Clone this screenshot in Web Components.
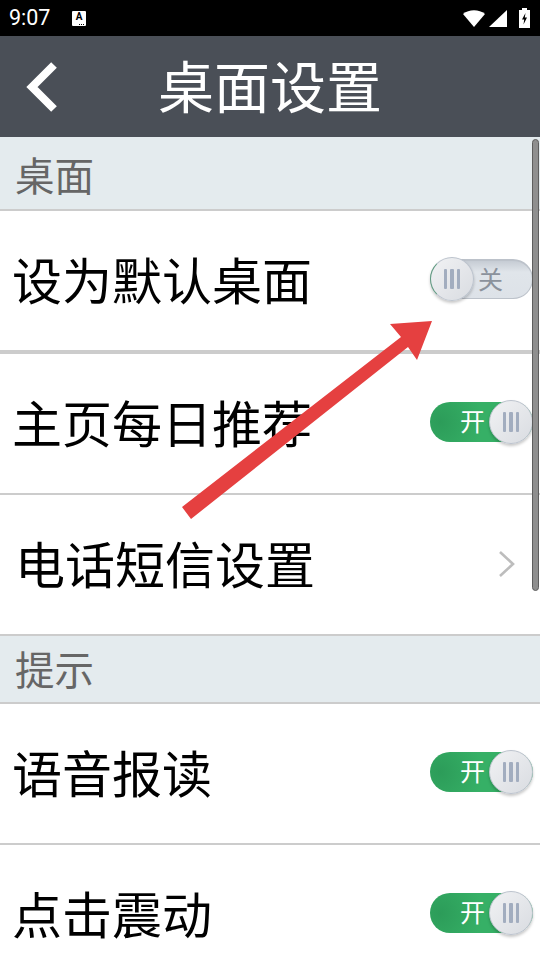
<!DOCTYPE html>
<html lang="zh">
<head>
<meta charset="utf-8">
<title>桌面设置</title>
<style>
  html, body { margin: 0; padding: 0; background: #fff; }
  body {
    width: 540px; height: 960px; overflow: hidden; position: relative;
    font-family: "Noto Sans CJK SC", "Liberation Sans", sans-serif;
  }
</style>
</head>
<body>
<status-bar></status-bar>
<title-bar>桌面设置</title-bar>
<section-head style="height:72px;--nudge:1px">桌面</section-head>
<setting-row style="height:139px;--line:4px"><span>设为默认桌面</span><toggle-switch slot="end"></toggle-switch></setting-row>
<setting-row style="height:139px"><span>主页每日推荐</span><toggle-switch slot="end" on></toggle-switch></setting-row>
<setting-row style="height:139px;--indent:15px"><span>电话短信设置</span><row-chevron slot="end"></row-chevron></setting-row>
<section-head style="height:66px;--nudge:-3px">提示</section-head>
<setting-row style="height:139px"><span>语音报读</span><toggle-switch slot="end" on></toggle-switch></setting-row>
<setting-row style="height:139px"><span>点击震动</span><toggle-switch slot="end" on></toggle-switch></setting-row>
<scroll-thumb></scroll-thumb>
<red-arrow></red-arrow>

<script>
class StatusBar extends HTMLElement {
  constructor() {
    super();
    this.attachShadow({ mode: 'open' }).innerHTML = `
      <style>
        :host { display: flex; align-items: center; height: 36px; background: #000; color: #fff; padding: 0 0 0 9px; box-sizing: border-box; }
        .time { font: 21.5px/36px Roboto, "Liberation Sans", sans-serif; width: 63px; }
        .note { position: relative; width: 14px; height: 15px; background: #fff; border-radius: 1px; color: #000; font: bold 10px/12px Roboto, sans-serif; text-align: center; }
        .note::after { content: ""; position: absolute; right: 1px; bottom: 1px; width: 6px; height: 1px; background: repeating-linear-gradient(90deg, #000 0 1px, #fff 1px 2px); }
        .right { margin-left: auto; display: flex; align-items: center; height: 36px; padding-right: 10px; }
        svg { display: block; }
      </style>
      <span class="time">9:07</span>
      <span class="note">A</span>
      <div class="right">
        <svg width="22" height="17" viewBox="0 0 22 17" style="margin-right:4px"><path d="M0 4 C6 -1 16 -1 22 4 L11 17 Z" fill="#fff"/></svg>
        <svg width="18" height="17" viewBox="0 0 18 17" style="margin-right:12px"><path d="M18 0 V17 H0 Z" fill="#fff"/></svg>
        <svg width="11" height="20" viewBox="0 0 11 20"><path d="M3 0 H8 V2 H11 V20 H0 V2 H3 Z" fill="#fff"/><path d="M6.5 5 L3 11.5 H5.2 L4.5 16.5 L8 9.5 H5.8 Z" fill="#000"/></svg>
      </div>`;
  }
}
class TitleBar extends HTMLElement {
  constructor() {
    super();
    this.attachShadow({ mode: 'open' }).innerHTML = `
      <style>
        :host { display: flex; align-items: center; justify-content: center; position: relative; height: 101px; background: #4a4f57; color: #fff; font-size: 56px; line-height: 95px; }
        .t { display: block; height: 95px; margin-bottom: 6px; }
        svg { position: absolute; left: 25px; top: 25px; }
      </style>
      <svg width="36" height="52" viewBox="0 0 36 52"><path d="M29 4 L7 26 L29 48" fill="none" stroke="#fff" stroke-width="8"/></svg>
      <span class="t"><slot></slot></span>`;
  }
}
class SectionHead extends HTMLElement {
  constructor() {
    super();
    this.attachShadow({ mode: 'open' }).innerHTML = `
      <style>
        :host { display: flex; align-items: center; background: #e4ebee; color: #666; font-size: 39.5px; padding-left: 15px; border-bottom: 2px solid #ccc; }
        span { display: block; margin-top: var(--nudge, 0px); }
      </style>
      <span><slot></slot></span>`;
  }
}
class SettingRow extends HTMLElement {
  constructor() {
    super();
    this.attachShadow({ mode: 'open' }).innerHTML = `
      <style>
        :host { display: flex; align-items: center; justify-content: space-between; background: #fff; color: #000; font-size: 50px; padding-left: var(--indent, 12px); border-bottom: var(--line, 2px) solid #ccc; }
        :host(:last-of-type) { border-bottom: 0; }
        ::slotted(span) { margin-bottom: 6px; }
      </style>
      <slot></slot>
      <slot name="end"></slot>`;
  }
}
class ToggleSwitch extends HTMLElement {
  constructor() {
    super();
    const on = this.hasAttribute('on');
    this.attachShadow({ mode: 'open' }).innerHTML = `
      <style>
        :host { display: block; position: relative; width: 103px; height: 45px; margin: 0 7px 3px 0; }
        .track { position: absolute; inset: 2px 0 3px 0; border-radius: 20px; box-sizing: border-box; display: flex; align-items: center; font-size: 25px; line-height: 36px; }
        .track span { display: block; margin-top: -3px; }
        .on { background: radial-gradient(circle at 10px 20px, #2c9c59, #36b066 45%); color: #fff; justify-content: flex-start; padding-left: 30px; }
        .off { background: linear-gradient(#c6ccd4, #e0e5ea 30%, #dde2e8); color: #8b929c; justify-content: flex-end; padding-right: 29px; border: 1px solid #bcc2ca; border-top-width: 2px; }
        .knob { position: absolute; top: 0; width: 44px; height: 44px; border-radius: 50%; box-sizing: border-box; background: linear-gradient(135deg, #f1f2f4, #d9dce1); border: 1px solid #bcc3cd; box-shadow: 0 2px 3px rgba(0,0,0,.22); display: flex; align-items: center; justify-content: center; gap: 3px; }
        .knob i { width: 3.5px; height: 20px; background: #a2adbf; border-radius: 1px; }
        .knob.l { left: 0; border-left: 1px solid #5f9a80; }
        .knob.r { right: 0; }
      </style>
      <div class="track ${on ? 'on' : 'off'}"><span>${on ? '开' : '关'}</span></div>
      <div class="knob ${on ? 'r' : 'l'}"><i></i><i></i><i></i></div>`;
  }
}
class RowChevron extends HTMLElement {
  constructor() {
    super();
    this.attachShadow({ mode: 'open' }).innerHTML = `
      <style>
        :host { display: block; width: 18px; height: 28px; margin: 0 24px 2px 0; }
        svg { display: block; }
      </style>
      <svg width="18" height="28" viewBox="0 0 18 28"><path d="M2 2 L15 14 L2 26" fill="none" stroke="#bdbdbd" stroke-width="2.6"/></svg>`;
  }
}
// scrollbar thumb lies over the list
class ScrollThumb extends HTMLElement {
  constructor() {
    super();
    this.attachShadow({ mode: 'open' }).innerHTML = `
      <style>
        :host { display: block; position: absolute; left: 532px; top: 139px; width: 7px; height: 452px; background: #8f8f8f; border: 1px solid #5e5e5e; border-radius: 4px; box-sizing: border-box; }
      </style>`;
  }
}
// annotation drawn on top of the screenshot
class RedArrow extends HTMLElement {
  constructor() {
    super();
    this.attachShadow({ mode: 'open' }).innerHTML = `
      <style>
        :host { display: block; position: absolute; left: 0; top: 0; width: 540px; height: 960px; pointer-events: none; }
        svg { display: block; }
      </style>
      <svg width="540" height="960" viewBox="0 0 540 960">
        <polygon fill="#e54040" points="182,507 401,337 390,324 432,321 417,360 408,347 191,519"/>
      </svg>`;
  }
}
customElements.define('status-bar', StatusBar);
customElements.define('title-bar', TitleBar);
customElements.define('section-head', SectionHead);
customElements.define('setting-row', SettingRow);
customElements.define('toggle-switch', ToggleSwitch);
customElements.define('row-chevron', RowChevron);
customElements.define('scroll-thumb', ScrollThumb);
customElements.define('red-arrow', RedArrow);
</script>
</body>
</html>
